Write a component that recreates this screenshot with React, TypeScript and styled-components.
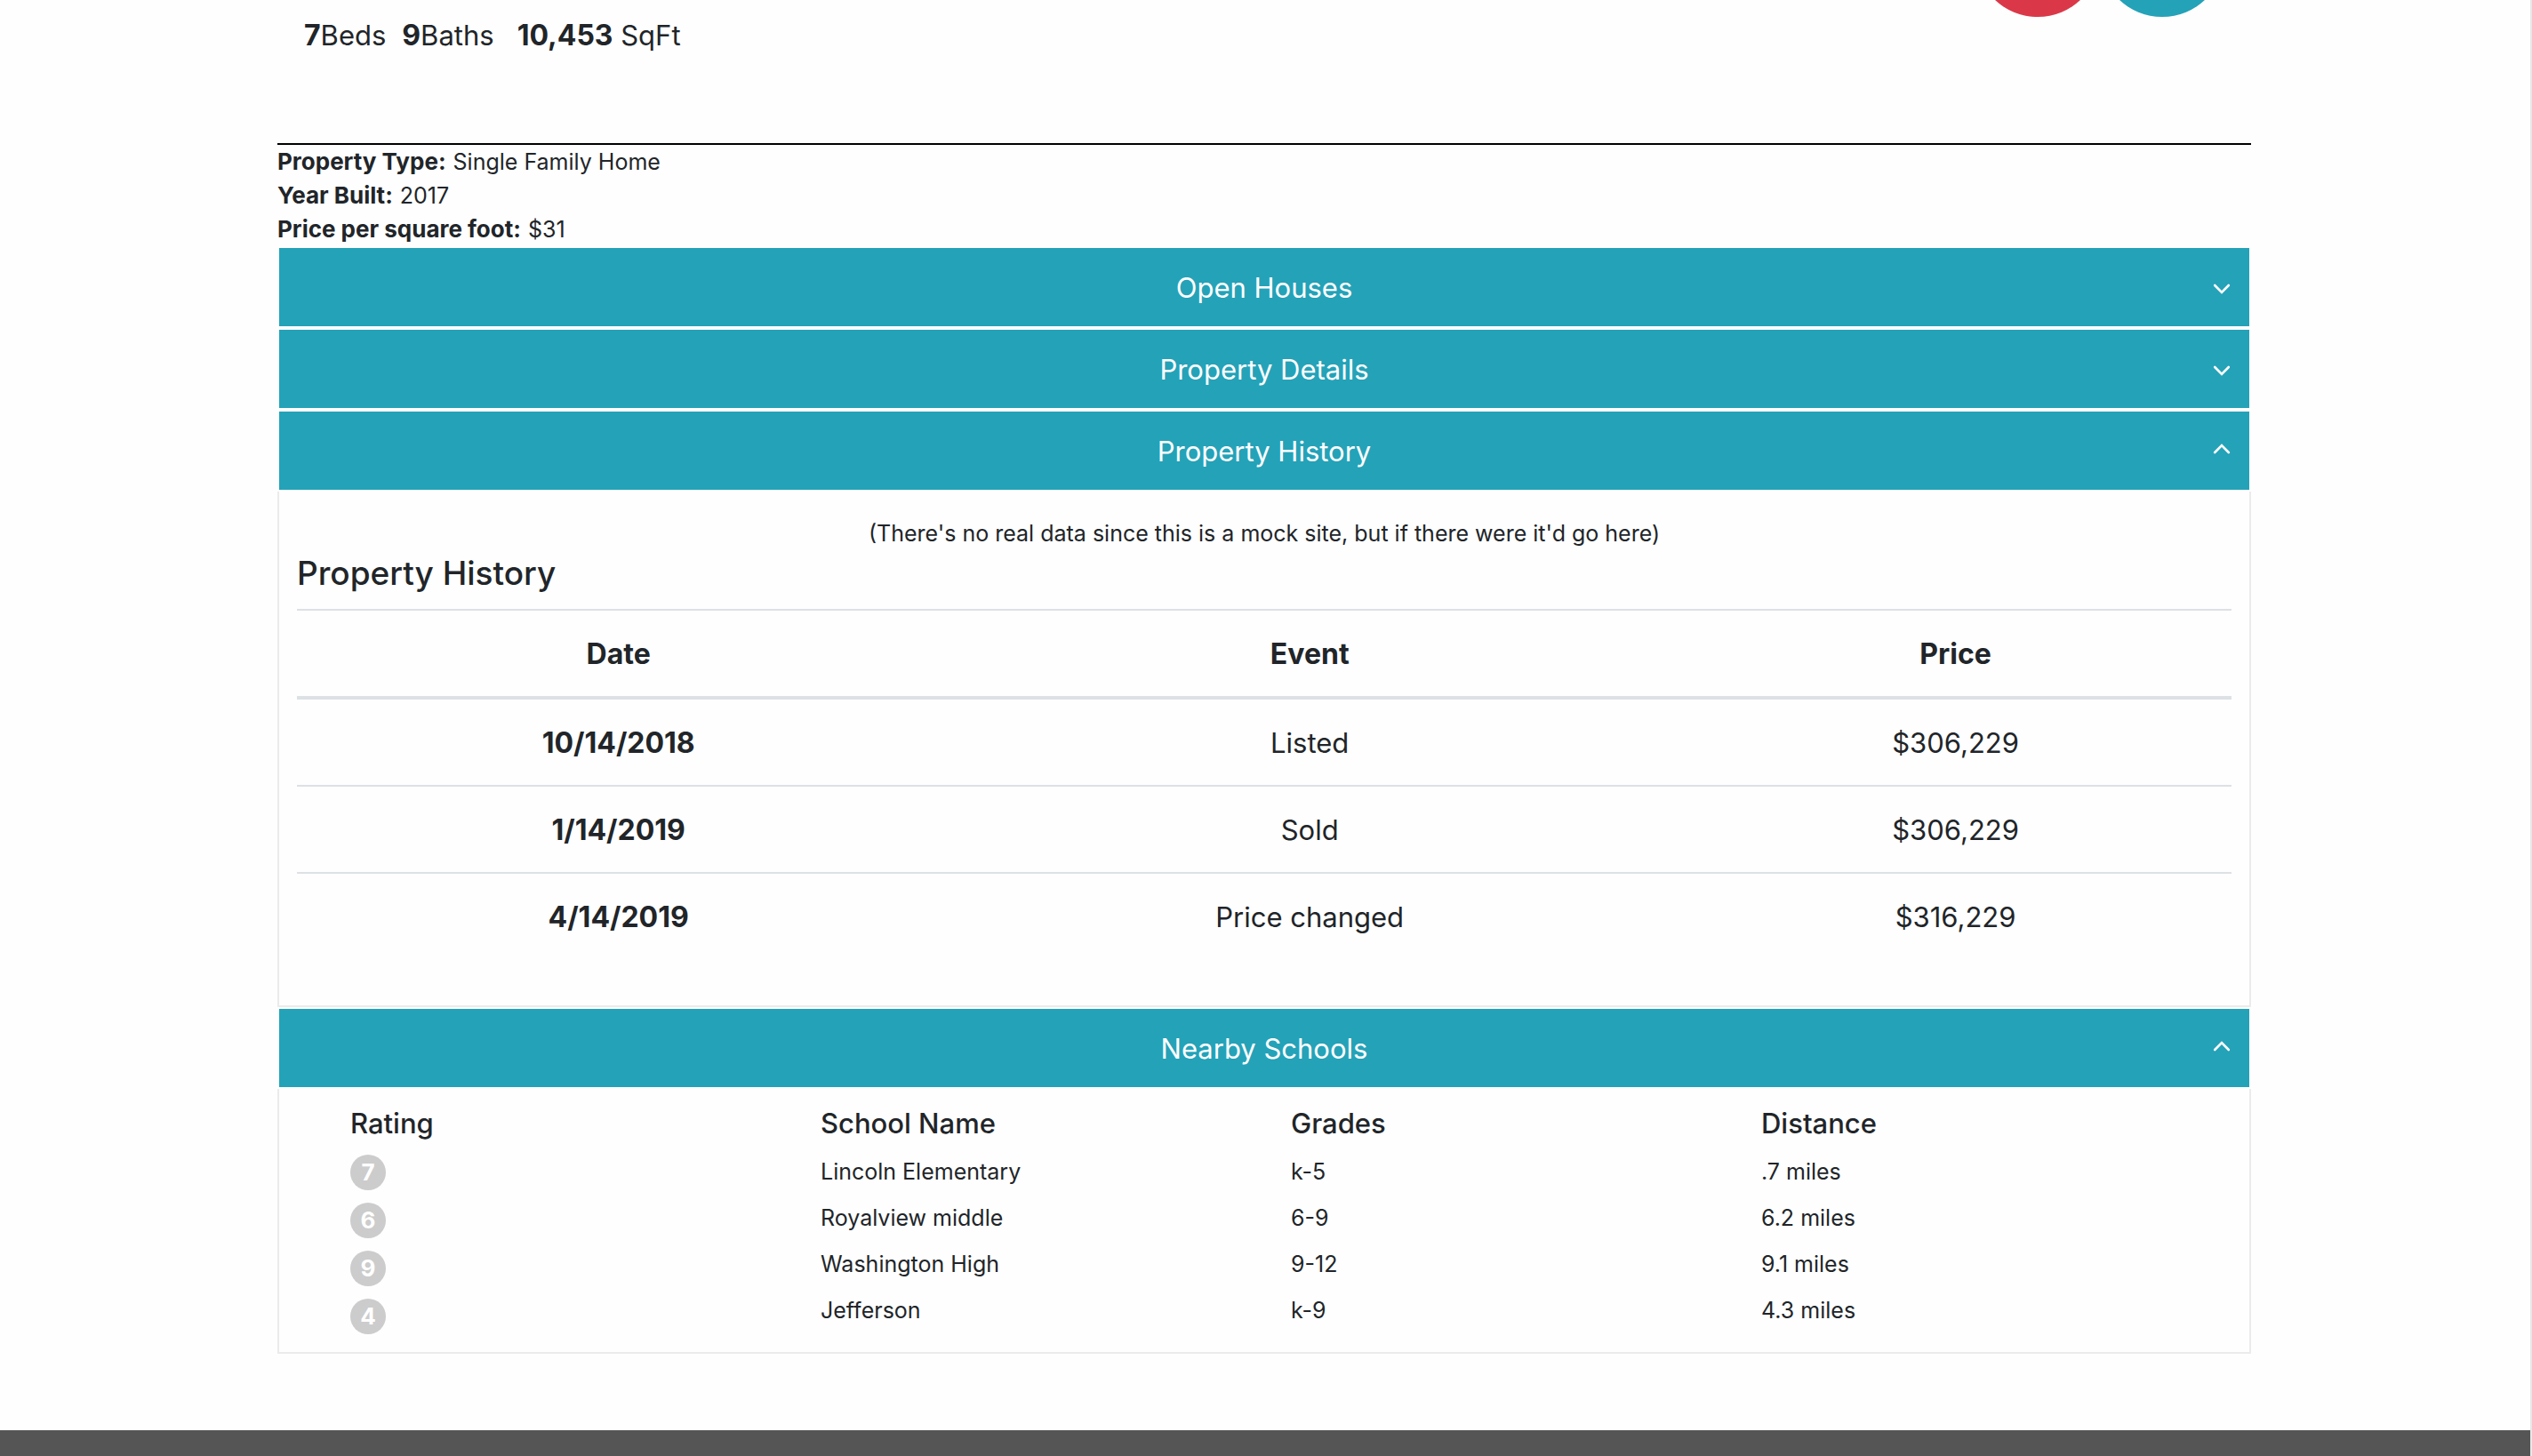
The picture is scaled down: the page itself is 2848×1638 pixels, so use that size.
import React, { useState } from "react";
import styled, { createGlobalStyle } from "styled-components";

const color = {
  text: "#212529",
  info: "#24a2b8",
  danger: "#da3849",
  rule: "#dde1e5",
  frame: "#ebebeb",
  badge: "#cccccc",
  footer: "#555555",
};

const GlobalStyle = createGlobalStyle`
  *, *::before, *::after { box-sizing: border-box; }
  body {
    margin: 0;
    background: #fefefe;
    color: ${color.text};
    font-family: Inter, "Noto Sans", sans-serif;
    font-size: 25px;
    line-height: 38px;
  }
  h4, h5, p, ul, dl, dd { margin: 0; padding: 0; }
`;

const Page = styled.div`
  display: flex;
  flex-direction: column;
  min-height: 100vh;
  border-right: 2px solid #e8e8e8;
  overflow: hidden;
`;

const Container = styled.main`
  width: 100%;
  max-width: 2282px;
  margin: 0 auto;
  padding: 0 32px 86px 30px;
`;

const Summary = styled.header`
  display: flex;
  justify-content: space-between;
  align-items: flex-start;
  padding: 0 30px 97px;
  border-bottom: 2px solid #000;
`;

const Stats = styled.ul`
  display: flex;
  flex-wrap: wrap;
  gap: 18px;
  padding-top: 16px;
  list-style: none;
  font-size: 31px;
  line-height: 48px;
`;

const Stat = styled.li<{ $spaced?: boolean }>`
  margin-left: ${(p) => (p.$spaced ? "8px" : "0")};

  b { font-size: 32px; }
`;

const Actions = styled.div`
  display: flex;
  margin-top: -121px;
  height: 140px;
`;

const RoundButton = styled.button<{ $tone: string }>`
  width: 140px;
  height: 140px;
  border: 0;
  border-radius: 50%;
  background: ${(p) => p.$tone};
`;

const Facts = styled.dl`
  display: flex;
  flex-direction: column;
`;

const Fact = styled.div`
  display: flex;
  align-items: baseline;
  gap: 8px;
  dt {
    font-size: 26px;
    font-weight: 700;
  }
`;

const Toggle = styled.button`
  display: grid;
  grid-template-columns: 1fr auto 1fr;
  align-items: center;
  width: 100%;
  padding: 21px 20px 19px;
  border: 2px solid #fefefe;
  background: ${color.info};
  color: #fff;
  font: inherit;
  font-size: 31px;
  line-height: 48px;
  cursor: pointer;
`;

const ToggleLabel = styled.span`
  grid-column: 2;
`;

const Chevron = styled.svg<{ $open: boolean }>`
  justify-self: end;
  width: 22px;
  height: 22px;
  fill: none;
  stroke: #fff;
  stroke-width: 2.6;
  stroke-linecap: round;
  transform: ${(p) => (p.$open ? "rotate(180deg)" : "none")};
`;

const PanelBody = styled.div<{ $top: number }>`
  padding: ${(p) => p.$top}px 20px 20px;
  border: 2px solid ${color.frame};
  border-top: 0;
`;

const Note = styled.p`
  margin-bottom: 2px;
  text-align: center;
`;

const Title = styled.h4`
  margin-bottom: 16px;
  font-size: 37px;
  font-weight: 500;
  line-height: 48px;
`;

const HistoryTable = styled.table`
  width: 100%;
  margin-bottom: 32px;
  border-spacing: 0;
  font-size: 31px;
  line-height: 48px;
  text-align: center;

  th, td { padding: 25px 24px 23px; }
  th {
    font-size: 32px;
    font-weight: 700;
  }
  thead th {
    border-top: 2px solid ${color.rule};
    border-bottom: 4px solid ${color.rule};
  }
  tbody tr + tr > * { border-top: 2px solid ${color.rule}; }
`;

const Column = styled.col<{ $width: number }>`
  width: ${(p) => p.$width}px;
`;

const SchoolTable = styled.table`
  display: block;
  padding: 0 30px;
  text-align: left;

  tbody { display: flex; }
`;

const SchoolField = styled.tr`
  display: flex;
  flex: 1;
  flex-direction: column;
  gap: 14px;
  padding: 0 30px;

  td { padding: 0; }
`;

const FieldName = styled.th`
  padding: 0;
  margin-bottom: 2px;
  font-size: 31px;
  font-weight: 500;
  line-height: 38px;
`;

const Badge = styled.span`
  display: flex;
  align-items: center;
  justify-content: center;
  width: 40px;
  height: 40px;
  border-radius: 50%;
  background: ${color.badge};
  color: #fff;
  font-size: 26px;
  font-weight: 700;
`;

const Footer = styled.footer`
  flex: 1;
  background: ${color.footer};
`;

const history = [
  ["10/14/2018", "Listed", "$306,229"],
  ["1/14/2019", "Sold", "$306,229"],
  ["4/14/2019", "Price changed", "$316,229"],
];

const facts = [
  ["Property Type:", "Single Family Home"],
  ["Year Built:", "2017"],
  ["Price per square foot:", "$31"],
];

const schoolFields = [
  ["School Name", "Lincoln Elementary", "Royalview middle", "Washington High", "Jefferson"],
  ["Grades", "k-5", "6-9", "9-12", "k-9"],
  ["Distance", ".7 miles", "6.2 miles", "9.1 miles", "4.3 miles"],
];

function Panel({
  title,
  defaultOpen = false,
  top = 20,
  children,
}: {
  title: string;
  defaultOpen?: boolean;
  top?: number;
  children?: React.ReactNode;
}) {
  const [open, setOpen] = useState(defaultOpen);
  return (
    <section>
      <Toggle type="button" aria-expanded={open} onClick={() => setOpen(!open)}>
        <ToggleLabel>{title}</ToggleLabel>
        <Chevron $open={open} viewBox="0 0 22 22" aria-hidden="true">
          <path d={open ? "M3.2 10 L11 18 L18.8 10" : "M3.2 8 L11 16 L18.8 8"} />
        </Chevron>
      </Toggle>
      {open && children && <PanelBody $top={top}>{children}</PanelBody>}
    </section>
  );
}

export default function App() {
  return (
    <Page>
      <GlobalStyle />
      <Container>
        <Summary>
          <Stats>
            <Stat><b>7</b>Beds</Stat>
            <Stat><b>9</b>Baths</Stat>
            <Stat $spaced><b>10,453</b> SqFt</Stat>
          </Stats>
          <Actions>
            <RoundButton type="button" $tone={color.danger} aria-label="Save" />
            <RoundButton type="button" $tone={color.info} aria-label="Share" />
          </Actions>
        </Summary>
        <Facts>
          {facts.map(([name, value]) => (
            <Fact key={name}>
              <dt>{name}</dt>
              <dd>{value}</dd>
            </Fact>
          ))}
        </Facts>
        <Panel title="Open Houses" />
        <Panel title="Property Details" />
        <Panel title="Property History" defaultOpen top={28}>
          <Note>(There's no real data since this is a mock site, but if there were it'd go here)</Note>
          <Title>Property History</Title>
          <HistoryTable>
            <colgroup>
              <Column $width={240} />
              <Column $width={276} />
              <Column $width={206} />
            </colgroup>
            <thead>
              <tr>
                <th scope="col">Date</th>
                <th scope="col">Event</th>
                <th scope="col">Price</th>
              </tr>
            </thead>
            <tbody>
              {history.map(([date, event, price]) => (
                <tr key={date}>
                  <th scope="row">{date}</th>
                  <td>{event}</td>
                  <td>{price}</td>
                </tr>
              ))}
            </tbody>
          </HistoryTable>
        </Panel>
        <Panel title="Nearby Schools" defaultOpen>
          <SchoolTable>
            <tbody>
              <SchoolField>
                <FieldName scope="row">Rating</FieldName>
                {[7, 6, 9, 4].map((rating) => (
                  <td key={rating}><Badge>{rating}</Badge></td>
                ))}
              </SchoolField>
              {schoolFields.map(([name, ...values]) => (
                <SchoolField key={name}>
                  <FieldName scope="row">{name}</FieldName>
                  {values.map((value) => <td key={value}>{value}</td>)}
                </SchoolField>
              ))}
            </tbody>
          </SchoolTable>
        </Panel>
      </Container>
      <Footer />
    </Page>
  );
}
